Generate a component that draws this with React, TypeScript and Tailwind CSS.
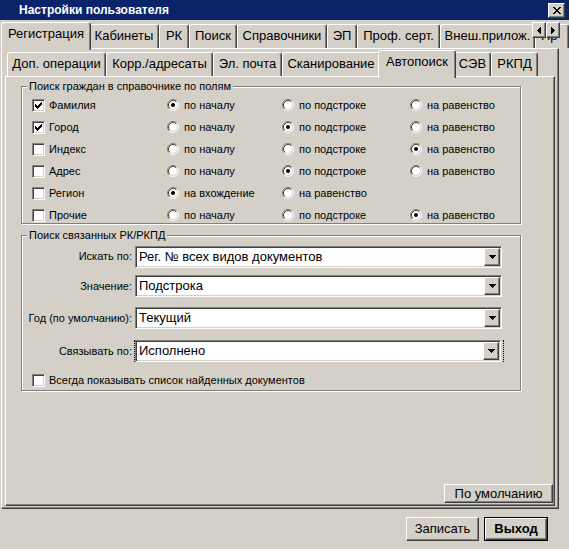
import React from "react";

const raised =
  "border border-t-white border-l-white border-r-[#404040] border-b-[#404040] shadow-[inset_-1px_-1px_0_#808080]";
const sunken =
  "border border-t-[#808080] border-l-[#808080] border-r-white border-b-white shadow-[inset_1px_1px_0_#404040,inset_-1px_-1px_0_#d4d0c8]";

type TabDef = { label: string; w: string; ws?: string; sel?: boolean; left?: boolean };

const tabs1: TabDef[] = [
  { label: "Регистрация", w: "w-[86px]", ws: "w-[90px]", sel: true },
  { label: "Кабинеты", w: "w-[70px]" },
  { label: "РК", w: "w-[30px]" },
  { label: "Поиск", w: "w-[48px]" },
  { label: "Справочники", w: "w-[90px]" },
  { label: "ЭП", w: "w-[30px]" },
  { label: "Проф. серт.", w: "w-[83px]" },
  { label: "Внеш.прилож.", w: "w-[95px]" },
  { label: "Пр", w: "w-[34px]", left: true },
];

const tabs2: TabDef[] = [
  { label: "Доп. операции", w: "w-[99px]" },
  { label: "Корр./адресаты", w: "w-[107px]" },
  { label: "Эл. почта", w: "w-[69px]" },
  { label: "Сканирование", w: "w-[98px]" },
  { label: "Автопоиск", w: "w-[74px]", ws: "w-[78px]", sel: true },
  { label: "СЭВ", w: "w-[37px]" },
  { label: "РКПД", w: "w-[47px]" },
];

function Tab({ t }: { t: TabDef }) {
  if (t.sel) {
    return (
      <div
        className={`relative z-10 -mx-[2px] -mb-[2px] h-[28px] shrink-0 ${t.ws} bg-[#d4d0c8] rounded-t-[3px] border-t border-l border-r border-t-white border-l-white border-r-[#404040] shadow-[inset_-1px_0_0_#808080] pt-[3px] text-center text-[13px] leading-[16px] whitespace-nowrap`}
      >
        {t.label}
      </div>
    );
  }
  return (
    <div
      className={`h-[24px] shrink-0 ${t.w} bg-[#d4d0c8] rounded-t-[3px] border-t border-l border-r border-t-white border-l-white border-r-[#404040] shadow-[inset_-1px_0_0_#808080] pt-[3px] ${t.left ? "text-left pl-[5px]" : "text-center"} text-[13px] leading-[16px] whitespace-nowrap overflow-hidden`}
    >
      {t.label}
    </div>
  );
}

function CheckBox({ on }: { on?: boolean }) {
  return (
    <div className={`relative w-[13px] h-[13px] shrink-0 bg-white ${sunken}`}>
      {on && (
        <svg className="absolute left-[2px] top-[2px]" width="7" height="7" viewBox="0 0 7 7">
          <rect x="6" y="0" width="1" height="1" fill="#000" />
          <rect x="5" y="1" width="2" height="1" fill="#000" />
          <rect x="0" y="2" width="1" height="1" fill="#000" />
          <rect x="4" y="2" width="3" height="1" fill="#000" />
          <rect x="0" y="3" width="2" height="1" fill="#000" />
          <rect x="3" y="3" width="3" height="1" fill="#000" />
          <rect x="0" y="4" width="5" height="1" fill="#000" />
          <rect x="1" y="5" width="3" height="1" fill="#000" />
          <rect x="2" y="6" width="1" height="1" fill="#000" />
        </svg>
      )}
    </div>
  );
}

function Radio({ on }: { on?: boolean }) {
  return (
    <svg width="12" height="12" viewBox="0 0 12 12" className="shrink-0">
      <circle cx="6" cy="6" r="5" fill="#fff" />
      <path d="M2.11 9.89A5.5 5.5 0 0 1 9.89 2.11" fill="none" stroke="#808080" />
      <path d="M2.82 9.18A4.5 4.5 0 0 1 9.18 2.82" fill="none" stroke="#404040" />
      <path d="M9.89 2.11A5.5 5.5 0 0 1 2.11 9.89" fill="none" stroke="#fff" />
      <path d="M9.18 2.82A4.5 4.5 0 0 1 2.82 9.18" fill="none" stroke="#d4d0c8" />
      {on && <circle cx="6" cy="6" r="2" fill="#000" />}
    </svg>
  );
}

function RadioOpt({ label, on }: { label: string; on?: boolean }) {
  return (
    <div className="flex items-center gap-[5px]">
      <Radio on={on} />
      <span className="text-[11px] leading-[13px] whitespace-nowrap">{label}</span>
    </div>
  );
}

function Group({
  title,
  className,
  children,
}: {
  title: string;
  className: string;
  children: React.ReactNode;
}) {
  return (
    <div
      className={`relative shrink-0 border border-[#808080] shadow-[inset_1px_1px_0_#fff,1px_1px_0_#fff] ${className}`}
    >
      <span className="absolute left-[5px] top-[-8px] px-[2px] bg-[#d4d0c8] text-[11px] leading-[14px] whitespace-nowrap">
        {title}
      </span>
      {children}
    </div>
  );
}

function DownArrow() {
  return (
    <svg width="7" height="4" viewBox="0 0 7 4">
      <path d="M0 0h7v1h-1v1h-1v1h-1v1h-1v-1h-1v-1h-1v-1h-1z" fill="#000" />
    </svg>
  );
}

function Combo({ value, w }: { value: string; w: string }) {
  return (
    <div className={`flex items-center h-[22px] ${w} bg-white ${sunken}`}>
      <span className="flex-1 pl-[3px] text-[13px] leading-[16px] whitespace-nowrap overflow-hidden">
        {value}
      </span>
      <div
        className={`mr-[1px] w-[16px] h-[18px] bg-[#d4d0c8] flex items-center justify-center ${raised}`}
      >
        <DownArrow />
      </div>
    </div>
  );
}

const rows = [
  { label: "Фамилия", on: true, opts: ["по началу", "по подстроке", "на равенство"], sel: 0 },
  { label: "Город", on: true, opts: ["по началу", "по подстроке", "на равенство"], sel: 1 },
  { label: "Индекс", on: false, opts: ["по началу", "по подстроке", "на равенство"], sel: 2 },
  { label: "Адрес", on: false, opts: ["по началу", "по подстроке", "на равенство"], sel: 1 },
  { label: "Регион", on: false, opts: ["на вхождение", "на равенство"], sel: 0 },
  { label: "Прочие", on: false, opts: ["по началу", "по подстроке", "на равенство"], sel: 2 },
];

function Btn({ children, className }: { children: React.ReactNode; className: string }) {
  return (
    <div
      className={`bg-[#d4d0c8] flex items-center justify-center text-[13px] leading-[16px] whitespace-nowrap ${raised} ${className}`}
    >
      {children}
    </div>
  );
}

export default function App() {
  return (
    <div className="relative w-[569px] h-[549px] overflow-hidden bg-[#d4d0c8] text-black font-['Liberation_Sans',Arial,sans-serif]">
      {/* title bar */}
      <div className="h-[20px] bg-[#0a246a] flex items-center justify-between pl-[19px] pr-[4px]">
        <span className="text-white font-bold text-[12px] leading-[14px]">Настройки пользователя</span>
        <div className={`w-[17px] h-[15px] bg-[#d4d0c8] flex items-center justify-center ${raised}`}>
          <svg width="8" height="7" viewBox="0 0 8 7">
            <path d="M0 0h2v1h1v1h2v-1h1v-1h2v1h-1v1h-1v1h-1v1h1v1h1v1h1v1h-2v-1h-1v-1h-2v1h-1v1h-2v-1h1v-1h1v-1h1v-1h-1v-1h-1v-1h-1z" fill="#000" />
          </svg>
        </div>
      </div>

      {/* outer tab strip */}
      <div className="h-[28px] flex items-end pl-[3px]">
        {tabs1.map((t) => (
          <Tab key={t.label} t={t} />
        ))}
      </div>

      {/* tab scroll arrows */}
      <div className="absolute left-[532px] top-[22px] z-20 flex">
        <div className={`w-[14px] h-[16px] bg-[#d4d0c8] flex items-center justify-center ${raised}`}>
          <svg width="4" height="7" viewBox="0 0 4 7">
            <path d="M3 0h1v7h-1v-1h-1v-1h-1v-1h-1v-1h1v-1h1v-1h1z" fill="#000" />
          </svg>
        </div>
        <div className={`w-[14px] h-[16px] bg-[#d4d0c8] flex items-center justify-center ${raised}`}>
          <svg width="4" height="7" viewBox="0 0 4 7">
            <path d="M0 0h1v1h1v1h1v1h1v1h-1v1h-1v1h-1v1h-1z" fill="#000" />
          </svg>
        </div>
      </div>

      {/* outer page */}
      <div className={`ml-[1px] w-[558px] h-[461px] pt-[1px] ${raised}`}>
        <div className="h-[26px] flex items-end pl-[5px]">
          {tabs2.map((t) => (
            <Tab key={t.label} t={t} />
          ))}
        </div>

        {/* inner page */}
        <div className={`ml-[3px] w-[550px] h-[430px] flex flex-col ${raised}`}>
          <Group
            title="Поиск граждан в справочнике по полям"
            className="ml-[15px] mt-[9px] w-[500px] h-[138px] pt-[7px]"
          >
            {rows.map((r) => (
              <div
                key={r.label}
                className="grid grid-cols-[135px_115px_128px_1fr] items-center h-[22px] pl-[10px]"
              >
                <div className="flex items-center gap-[4px]">
                  <CheckBox on={r.on} />
                  <span className="text-[11px] leading-[13px]">{r.label}</span>
                </div>
                {r.opts.map((o, i) => (
                  <RadioOpt key={o} label={o} on={i === r.sel} />
                ))}
              </div>
            ))}
          </Group>

          <Group
            title="Поиск связанных РК/РКПД"
            className="ml-[15px] mt-[11px] w-[500px] h-[156px] pt-[9px]"
          >
            <div className="flex items-center h-[23px]">
              <div className="w-[110px] flex justify-end text-[11px] whitespace-nowrap">
                <span>Искать по:</span>
              </div>
              <div className="ml-[3px]">
                <Combo value="Рег. № всех видов документов" w="w-[367px]" />
              </div>
            </div>
            <div className="flex items-center h-[22px] mt-[7px]">
              <div className="w-[110px] flex justify-end text-[11px] whitespace-nowrap">
                <span>Значение:</span>
              </div>
              <div className="ml-[3px]">
                <Combo value="Подстрока" w="w-[367px]" />
              </div>
            </div>
            <div className="flex items-center h-[22px] mt-[10px]">
              <div className="w-[110px] flex justify-end text-[11px] whitespace-nowrap">
                <span>Год (по умолчанию):</span>
              </div>
              <div className="ml-[3px]">
                <Combo value="Текущий" w="w-[367px]" />
              </div>
            </div>
            <div className="flex items-center h-[22px] mt-[11px]">
              <div className="w-[110px] flex justify-end text-[11px] whitespace-nowrap">
                <span>Связывать по:</span>
              </div>
              <div className="ml-[2px] flex pr-[2px] border-x border-dotted border-black">
                <Combo value="Исполнено" w="w-[366px]" />
              </div>
            </div>
            <div className="flex items-center gap-[4px] h-[22px] mt-[7px] pl-[10px]">
              <CheckBox />
              <span className="text-[11px] leading-[13px]">
                Всегда показывать список найденных документов
              </span>
            </div>
          </Group>

          <div className="flex-1" />
          <Btn className="self-end mr-[1px] mb-[2px] w-[109px] h-[19px]">По умолчанию</Btn>
        </div>
      </div>

      {/* bottom buttons */}
      <div className="mt-[8px] flex justify-end gap-[5px] pr-[21px]">
        <Btn className="w-[73px] h-[24px]">Записать</Btn>
        <div className="w-[64px] h-[24px] border border-black">
          <Btn className="w-full h-full font-bold">Выход</Btn>
        </div>
      </div>
    </div>
  );
}
